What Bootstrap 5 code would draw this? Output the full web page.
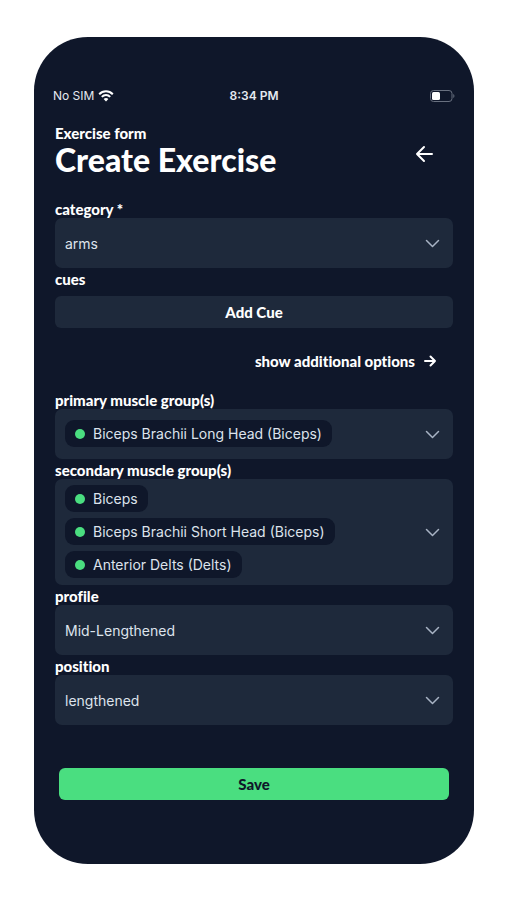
<!DOCTYPE html>
<html lang="en">
<head>
<meta charset="utf-8">
<meta name="viewport" content="width=device-width, initial-scale=1">
<title>Create Exercise</title>
<link href="https://cdn.jsdelivr.net/npm/bootstrap@5.3.0/dist/css/bootstrap.min.css" rel="stylesheet">
<style>
  body { background: #fff; font-family: Inter, "Liberation Sans", sans-serif; }
  .phone { margin: 37px 33px 36px 34px; padding: 50px 21px 64px; border-radius: 54px; background: #0f172a; color: #fff; }
  .heading-font { font-family: Lato, "Open Sans", sans-serif; font-weight: 900; font-variant-ligatures: none; }
  .status { margin: 0 -2px; font-size: 12px; line-height: 18px; color: #e5e9f0; }
  .status > * { flex: 1 1 0; }
  .clock { font-weight: 600; }
  .eyebrow { font-size: 15px; line-height: 17px; }
  .title { font-size: 32px; line-height: 36px; }
  .field-label { display: block; position: relative; z-index: 1; padding: 3px 0 1px; font-size: 15px; line-height: 16px; }
  .picker { display: grid; align-items: center; }
  .picker > * { grid-area: 1 / 1; }
  .picker > svg { justify-self: end; margin-right: 13px; pointer-events: none; }
  .field, .field:focus { min-height: 50px; padding: 0 40px 0 10px; border: 0; border-radius: 7px; background: #1e293b; color: #dde3ec; font-size: 14px; line-height: 21px; }
  .field-chips { gap: 6px; padding-top: 6px; padding-bottom: 7px; }
  .chip { padding: 3px 10px; border-radius: 9px; background: #0f172a; }
  .dot { width: 10px; height: 10px; background: #4ade80; }
  .bar-btn { padding: 6px; border: 0; border-radius: 6px; font-size: 15px; line-height: 20px; }
  .bar-dark, .bar-dark:hover { background: #1e293b; color: #fff; }
  .bar-green, .bar-green:hover { background: #4ade80; color: #0f172a; }
  .more-row { margin: 23px 0 18px; }
  .more { font-size: 15px; line-height: 20px; color: #fff; }
  .save-row { margin-top: 43px; }
</style>
</head>
<body>
<main class="phone">
  <div class="status d-flex align-items-center">
    <div class="d-flex align-items-center gap-1"><span>No SIM</span>
      <svg width="16" height="12" viewBox="0 0 16 12" fill="none" stroke="#fff" stroke-width="2" aria-hidden="true"><path d="M1.2 4.2C5 .3 11 .3 14.8 4.2"/><path d="M3.8 6.9C6.200 4.500 9.800 4.500 12.200 6.900"/><path d="M5.600 8.900C7 7.600 9 7.600 10.400 8.900L8 11.400Z" fill="#fff" stroke="none"/></svg>
    </div>
    <div class="clock text-center">8:34 PM</div>
    <div class="d-flex justify-content-end">
      <svg width="25" height="12" viewBox="0 0 25 12" aria-hidden="true"><rect x=".5" y=".5" width="21.500" height="11" rx="3" fill="none" stroke="#68707f"/><rect x="2" y="2" width="8" height="8" rx="1.500" fill="#fff"/><path d="M23.300 4v4c1.500-.6 1.500-3.400 0-4Z" fill="#68707f"/></svg>
    </div>
  </div>

  <header class="d-flex justify-content-between align-items-center mt-3 pt-1">
    <div class="heading-font">
      <div class="eyebrow">Exercise form</div>
      <h1 class="title heading-font m-0">Create Exercise</h1>
    </div>
    <button type="button" class="btn p-0 border-0 mt-1 me-3 d-flex" aria-label="Back">
      <svg width="24" height="24" viewBox="0 0 24 24" fill="none" stroke="#fff" stroke-width="2" stroke-linecap="round" stroke-linejoin="round" aria-hidden="true"><path d="M19 12H4M11 5l-7 7 7 7"/></svg>
    </button>
  </header>

  <form class="mt-3 pt-1">
    <label class="field-label heading-font" for="category">category *</label>
    <div class="picker">
      <select id="category" class="form-select field"><option>arms</option></select>
      <svg width="15" height="9" viewBox="0 0 15 9" fill="none" stroke="#a8b3c4" stroke-width="1.500" stroke-linecap="round" stroke-linejoin="round" aria-hidden="true"><path d="M1.500 1.500l6 6 6-6"/></svg>
    </div>

    <label class="field-label heading-font" for="cue">cues</label>
    <button id="cue" type="button" class="btn bar-btn bar-dark heading-font w-100 mt-2">Add Cue</button>

    <div class="more-row d-flex justify-content-end">
      <a href="#" class="more heading-font text-decoration-none d-inline-flex align-items-center gap-2 me-3">show additional options
        <svg width="14" height="14" viewBox="0 0 14 14" fill="none" stroke="#fff" stroke-width="2" stroke-linecap="round" stroke-linejoin="round" aria-hidden="true"><path d="M2 7h10M7.500 2.500L12 7l-4.500 4.500"/></svg></a>
    </div>

    <label class="field-label heading-font" for="primary">primary muscle group(s)</label>
    <div class="picker">
      <button id="primary" type="button" class="btn field field-chips d-flex flex-column justify-content-center align-items-start">
        <span class="chip d-flex align-items-center gap-2"><span class="dot rounded-circle"></span>Biceps Brachii Long Head (Biceps)</span>
      </button>
      <svg width="15" height="9" viewBox="0 0 15 9" fill="none" stroke="#a8b3c4" stroke-width="1.500" stroke-linecap="round" stroke-linejoin="round" aria-hidden="true"><path d="M1.500 1.500l6 6 6-6"/></svg>
    </div>

    <label class="field-label heading-font" for="secondary">secondary muscle group(s)</label>
    <div class="picker">
      <button id="secondary" type="button" class="btn field field-chips d-flex flex-column align-items-start">
        <span class="chip d-flex align-items-center gap-2"><span class="dot rounded-circle"></span>Biceps</span>
        <span class="chip d-flex align-items-center gap-2"><span class="dot rounded-circle"></span>Biceps Brachii Short Head (Biceps)</span>
        <span class="chip d-flex align-items-center gap-2"><span class="dot rounded-circle"></span>Anterior Delts (Delts)</span>
      </button>
      <svg width="15" height="9" viewBox="0 0 15 9" fill="none" stroke="#a8b3c4" stroke-width="1.500" stroke-linecap="round" stroke-linejoin="round" aria-hidden="true"><path d="M1.500 1.500l6 6 6-6"/></svg>
    </div>

    <label class="field-label heading-font" for="profile">profile</label>
    <div class="picker">
      <select id="profile" class="form-select field"><option>Mid-Lengthened</option></select>
      <svg width="15" height="9" viewBox="0 0 15 9" fill="none" stroke="#a8b3c4" stroke-width="1.500" stroke-linecap="round" stroke-linejoin="round" aria-hidden="true"><path d="M1.500 1.500l6 6 6-6"/></svg>
    </div>

    <label class="field-label heading-font" for="position">position</label>
    <div class="picker">
      <select id="position" class="form-select field"><option>lengthened</option></select>
      <svg width="15" height="9" viewBox="0 0 15 9" fill="none" stroke="#a8b3c4" stroke-width="1.500" stroke-linecap="round" stroke-linejoin="round" aria-hidden="true"><path d="M1.500 1.500l6 6 6-6"/></svg>
    </div>

    <div class="save-row px-1">
      <button type="submit" class="btn bar-btn bar-green heading-font w-100">Save</button>
    </div>
  </form>
</main>
<script src="https://cdn.jsdelivr.net/npm/bootstrap@5.3.0/dist/js/bootstrap.bundle.min.js"></script>
</body>
</html>
